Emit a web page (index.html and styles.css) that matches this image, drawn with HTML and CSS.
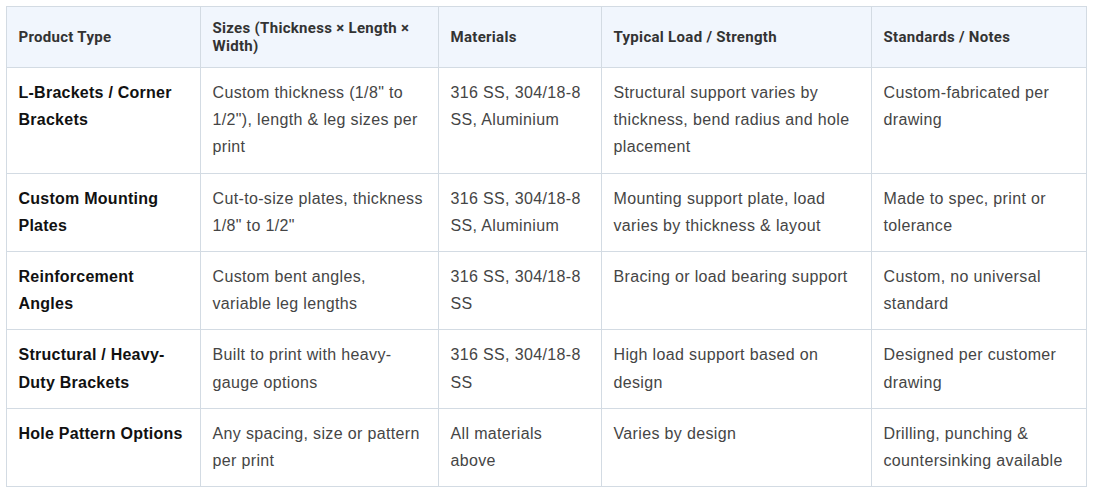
FILE: index.html
```html
<!DOCTYPE html>
<html lang="en">
<head>
<meta charset="utf-8">
<title>Product Table</title>
<link rel="stylesheet" href="styles.css">
</head>
<body>
<div class="wrap">
<table class="spec">
  <colgroup>
    <col class="c1"><col class="c2"><col class="c3"><col class="c4"><col class="c5">
  </colgroup>
  <thead>
    <tr>
      <th>Product Type</th>
      <th>Sizes (Thickness × Length × Width)</th>
      <th>Materials</th>
      <th>Typical Load / Strength</th>
      <th>Standards / Notes</th>
    </tr>
  </thead>
  <tbody>
    <tr>
      <td class="name">L-Brackets / Corner Brackets</td>
      <td>Custom thickness (1/8" to 1/2"), length &amp; leg sizes per print</td>
      <td>316 SS, 304/18-8 SS, Aluminium</td>
      <td>Structural support varies by thickness, bend radius and hole placement</td>
      <td>Custom-fabricated per drawing</td>
    </tr>
    <tr>
      <td class="name">Custom Mounting Plates</td>
      <td>Cut-to-size plates, thickness 1/8" to 1/2"</td>
      <td>316 SS, 304/18-8 SS, Aluminium</td>
      <td>Mounting support plate, load varies by thickness &amp; layout</td>
      <td>Made to spec, print or tolerance</td>
    </tr>
    <tr>
      <td class="name">Reinforcement Angles</td>
      <td>Custom bent angles, variable leg lengths</td>
      <td>316 SS, 304/18-8 SS</td>
      <td>Bracing or load bearing support</td>
      <td>Custom, no universal standard</td>
    </tr>
    <tr>
      <td class="name">Structural / Heavy-Duty Brackets</td>
      <td>Built to print with heavy-gauge options</td>
      <td>316 SS, 304/18-8 SS</td>
      <td>High load support based on design</td>
      <td>Designed per customer drawing</td>
    </tr>
    <tr>
      <td class="name">Hole Pattern Options</td>
      <td>Any spacing, size or pattern per print</td>
      <td>All materials above</td>
      <td>Varies by design</td>
      <td>Drilling, punching &amp; countersinking available</td>
    </tr>
  </tbody>
</table>
</div>
</body>
</html>
```
FILE: styles.css
```css
html, body {
  margin: 0;
  padding: 0;
  background: #ffffff;
}
.wrap {
  padding: 6px;
}
.spec {
  border-collapse: collapse;
  table-layout: fixed;
  width: 1081px;
  font-family: "Liberation Sans", Arial, sans-serif;
}
.c1 { width: 194px; }
.c2 { width: 238px; }
.c3 { width: 163px; }
.c4 { width: 270px; }
.c5 { width: 215px; }
.spec th,
.spec td {
  border: 1px solid #d3dbe3;
  text-align: left;
}
.spec th {
  background: #f1f6fd;
  font-family: Roboto, "Liberation Sans", sans-serif;
  font-weight: 700;
  font-size: 15px;
  line-height: 18px;
  letter-spacing: 0.3px;
  color: #333333;
  padding: 12px 12px 12px 11.5px;
  vertical-align: middle;
}
.spec td {
  font-size: 16px;
  line-height: 1.7;
  letter-spacing: 0.35px;
  color: #454545;
  padding: 11px 12px 12px 11.5px;
  vertical-align: top;
}
.spec td.name {
  font-weight: 700;
  letter-spacing: 0.25px;
  color: #111111;
}
```
